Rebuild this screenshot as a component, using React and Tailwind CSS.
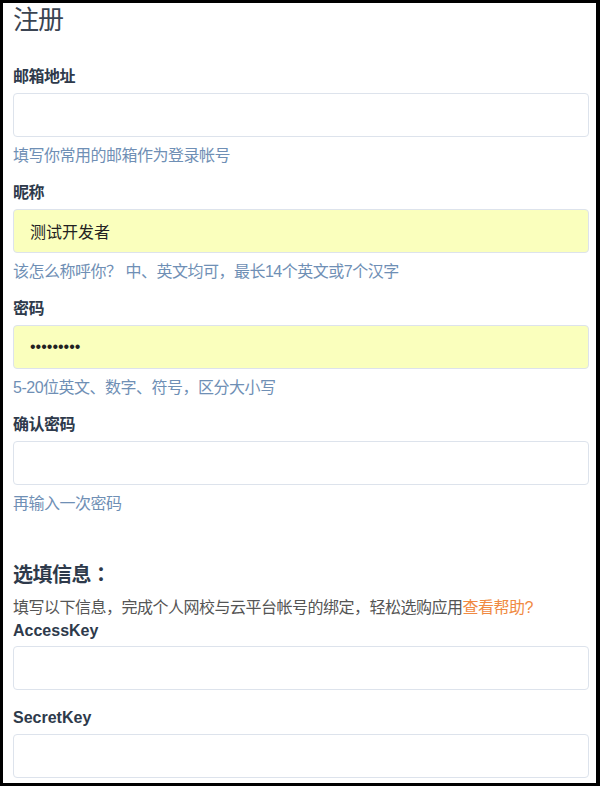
import React from "react";

const FONT = "font-['Liberation_Sans','Noto_Sans_CJK_SC',sans-serif]";

function Field({ label, value, filled, help, cjkLabel = true, last }) {
  return (
    <div className={last ? "" : "mb-[17px]"}>
      <div
        className={`text-[16px] leading-[20px] font-bold text-[#2e3a4b] mb-[6px] ${
          cjkLabel ? "tracking-[-0.5px]" : ""
        }`}
      >
        {label}
      </div>
      <input
        readOnly
        value={value || ""}
        className={`block w-full h-[44px] rounded-[4px] border border-[#dde3ec] pl-[16px] text-[16px] text-[#222] outline-none ${
          filled ? "bg-[#faffbd]" : "bg-white"
        } ${FONT}`}
      />
      {help && (
        <div className="mt-[9px] text-[16px] leading-[20px] text-[#6f8fb5] tracking-[-0.5px]">
          {help}
        </div>
      )}
    </div>
  );
}

export default function App() {
  return (
    <div
      className={`w-[600px] h-[786px] overflow-hidden bg-white border-black border-t-[3px] border-l-[3px] border-r-[4px] border-b-[3px] ${FONT}`}
    >
      <div className="pl-[10px] pr-[7px] pt-[3px]">
        <h1 className="text-[26px] leading-[28px] font-normal text-[#3a4452] tracking-[-1px] mb-[33px]">
          注册
        </h1>
        <Field label="邮箱地址" help="填写你常用的邮箱作为登录帐号" />
        <Field
          label="昵称"
          value="测试开发者"
          filled
          help="该怎么称呼你？ 中、英文均可，最长14个英文或7个汉字"
        />
        <Field
          label="密码"
          value="•••••••••"
          filled
          help="5-20位英文、数字、符号，区分大小写"
        />
        <Field label="确认密码" help="再输入一次密码" last />

        <h2 className="mt-[46px] h-[28px] text-[20px] leading-[28px] font-bold text-[#2e3a4b] tracking-[-0.5px]">
          选填信息
          <span className="font-['Noto_Sans_CJK_TC',sans-serif]">：</span>
        </h2>
        <p className="mt-[10px] text-[16px] leading-[20px] text-[#555] tracking-[-0.5px]">
          填写以下信息，完成个人网校与云平台帐号的绑定，轻松选购应用
          <a className="text-[#f08a42]">查看帮助?</a>
        </p>
        <div className="mt-[3px]">
          <div className="text-[16px] leading-[20px] font-bold text-[#2e3a4b] mb-[5px]">
            AccessKey
          </div>
          <input
            readOnly
            className="block w-full h-[44px] rounded-[4px] border border-[#dde3ec] bg-white outline-none"
          />
        </div>
        <div className="mt-[18px]">
          <div className="text-[16px] leading-[20px] font-bold text-[#2e3a4b] mb-[6px]">
            SecretKey
          </div>
          <input
            readOnly
            className="block w-full h-[44px] rounded-[4px] border border-[#dde3ec] bg-white outline-none"
          />
        </div>
      </div>
    </div>
  );
}
